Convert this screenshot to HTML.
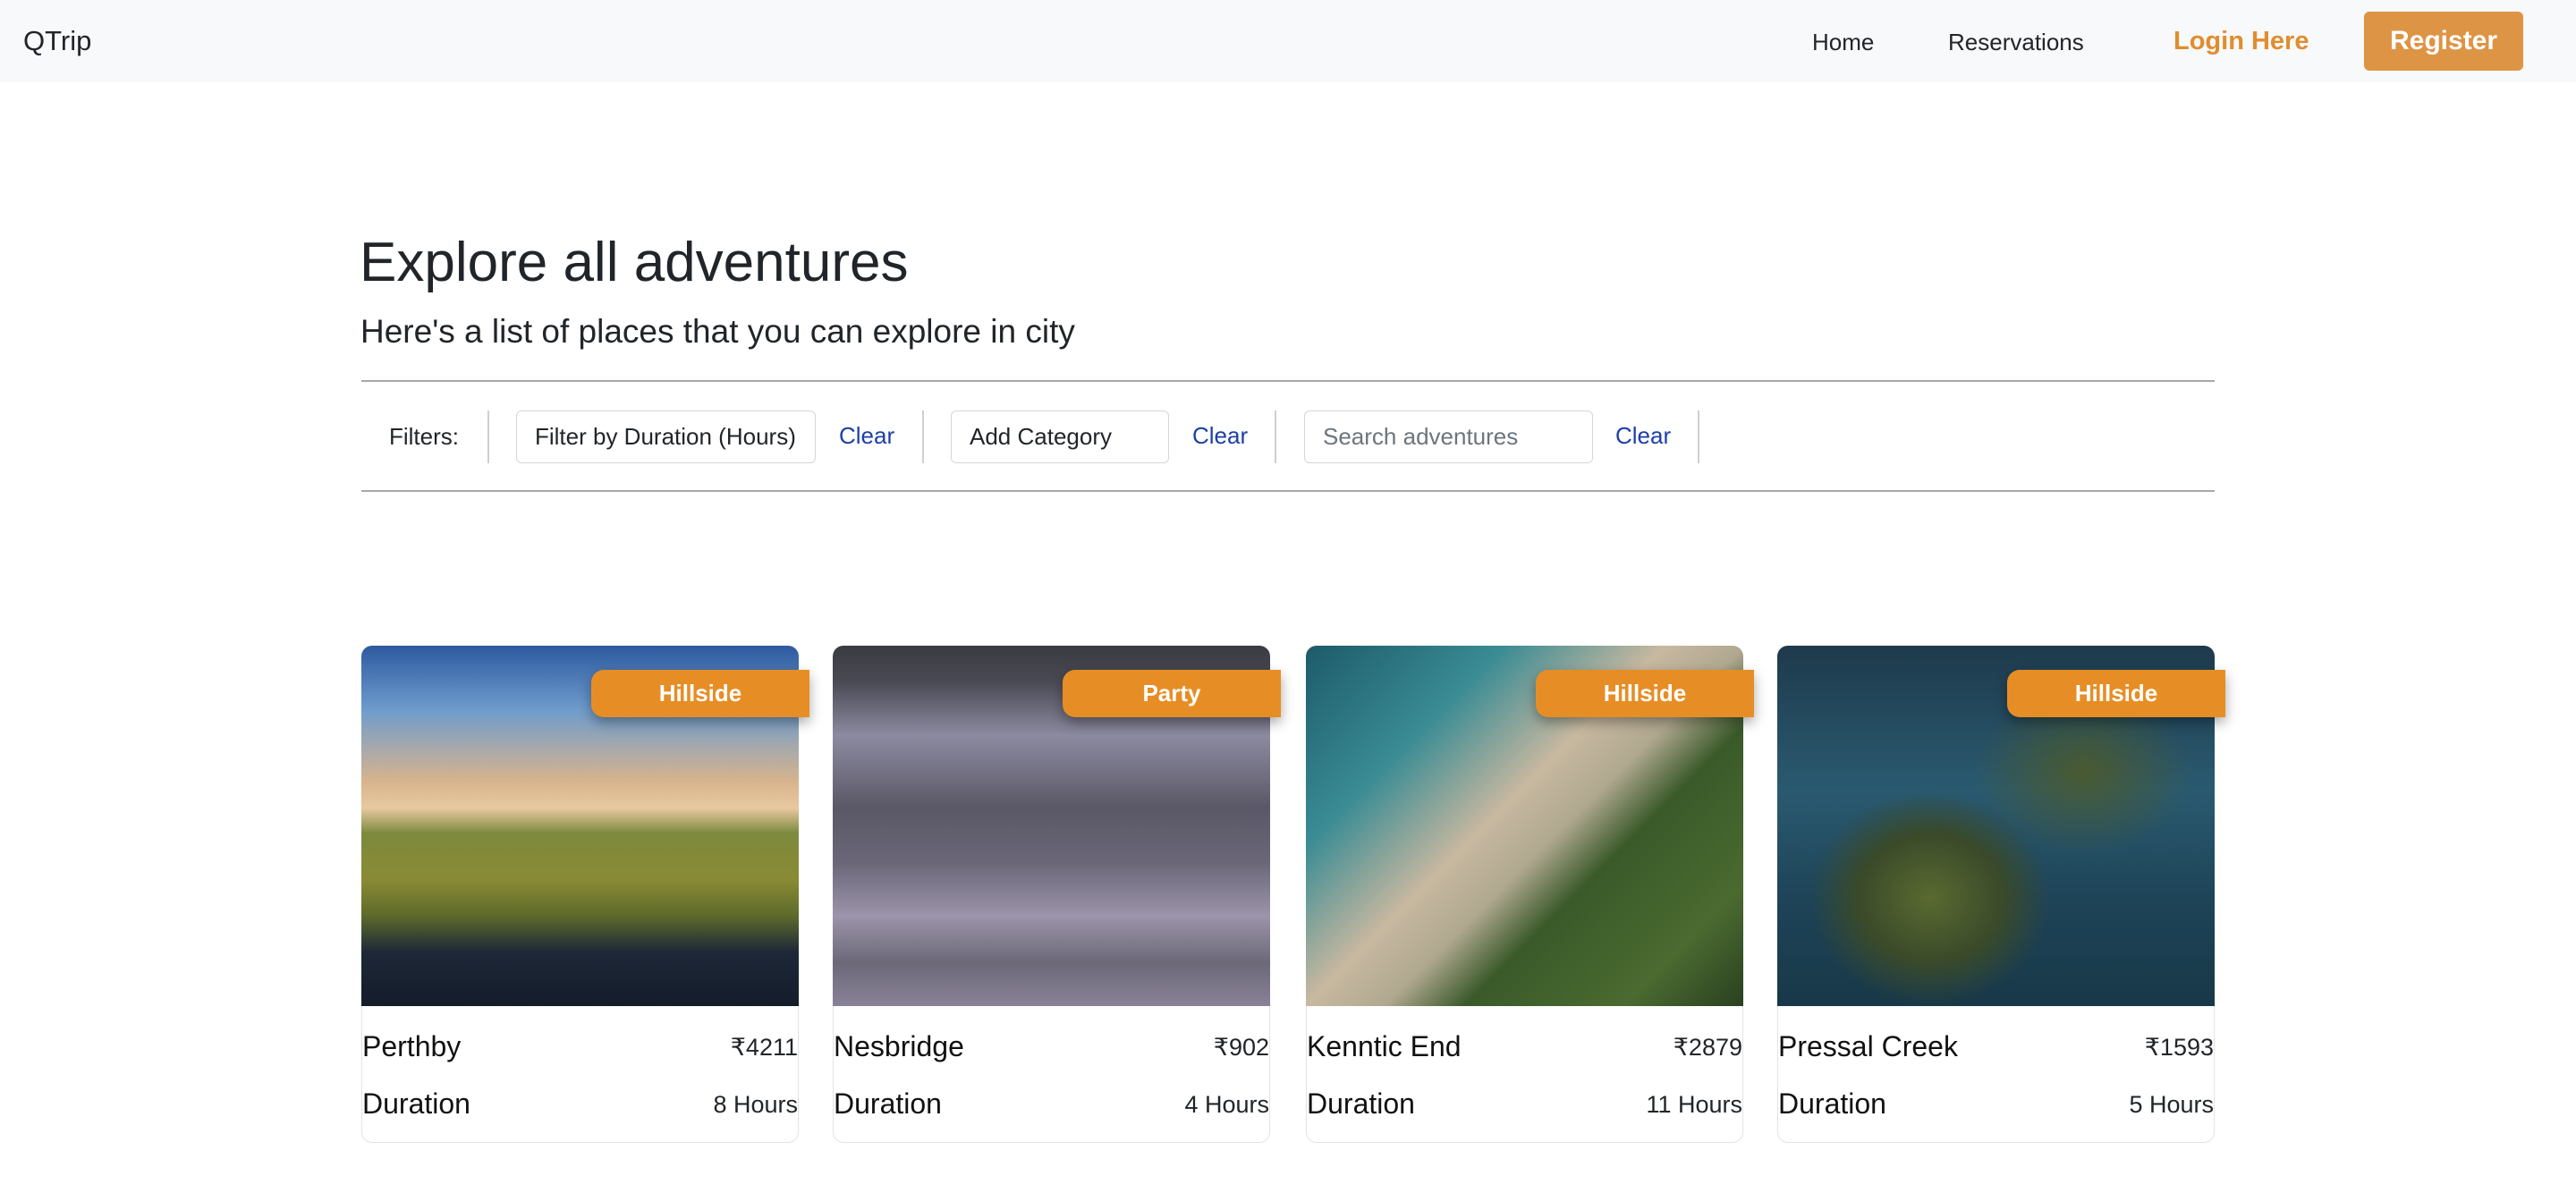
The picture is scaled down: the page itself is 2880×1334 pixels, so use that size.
<!DOCTYPE html>
<html><head><meta charset="utf-8"><style>
*{box-sizing:border-box;margin:0;padding:0}
body{width:2880px;height:1334px;background:#fff;font-family:"Liberation Sans",sans-serif;color:#212529;position:relative;overflow:hidden}
.nav{position:absolute;left:0;top:0;width:2880px;height:92px;background:#f8f9fa}
.a{position:absolute;white-space:nowrap}
.hr{position:absolute;left:404px;width:2072px;height:2px;background:#a8a8a8}
.inp{position:absolute;top:459px;height:59px;border:1.5px solid #d6d6d6;border-radius:6px;font-size:26px;line-height:56px;padding-left:20px;color:#212529;background:#fff}
.clr{position:absolute;top:472px;font-size:26px;color:#1d3fa8}
.sep{position:absolute;top:459px;width:2px;height:59px;background:#cfcfcf}
.card{position:absolute;top:722px;width:489px;height:556px;border:1.5px solid #e3e3e3;border-radius:12px;overflow:visible;background:#fff}
.img{position:absolute;left:-1px;top:-1px;width:489px;height:403px;border-radius:12px 12px 0 0;overflow:hidden}
.ban{position:absolute;left:256px;top:26px;width:244px;height:53px;background:#e68e25;border-radius:14px 0 0 14px;color:#fff;font-weight:bold;font-size:26px;text-align:center;line-height:53px;box-shadow:0 6px 14px rgba(0,0,0,.35)}
.nm{position:absolute;left:0;top:429px;font-size:32px;color:#111}
.pr{position:absolute;right:0;top:433px;font-size:27px}
.du{position:absolute;left:0;top:493px;font-size:32px;color:#111}
.hs{position:absolute;right:0;top:497px;font-size:27px}
</style></head><body>
<div class="nav">
<div class="a" style="left:26px;top:28px;font-size:31px">QTrip</div>
<div class="a" style="left:2026px;top:32px;font-size:26px">Home</div>
<div class="a" style="left:2178px;top:32px;font-size:26px">Reservations</div>
<div class="a" style="left:2430px;top:30px;font-size:29px;font-weight:bold;color:#e18d2e">Login Here</div>
<div class="a" style="left:2643px;top:13px;width:178px;height:66px;background:#dd9444;border-radius:6px;color:#fff;font-size:30px;font-weight:bold;text-align:center;line-height:66px">Register</div>
</div>
<div class="a" style="left:402px;top:258px;font-size:62px">Explore all adventures</div>
<div class="a" style="left:403px;top:350px;font-size:37px">Here's a list of places that you can explore in city</div>
<div class="hr" style="top:425px"></div>
<div class="hr" style="top:548px"></div>
<div class="a" style="left:435px;top:473px;font-size:26px">Filters:</div>
<div class="sep" style="left:545px"></div>
<div class="inp" style="left:577px;width:335px">Filter by Duration (Hours)</div>
<div class="clr" style="left:938px">Clear</div>
<div class="sep" style="left:1031px"></div>
<div class="inp" style="left:1063px;width:244px">Add Category</div>
<div class="clr" style="left:1333px">Clear</div>
<div class="sep" style="left:1425px"></div>
<div class="inp" style="left:1458px;width:323px;color:#6c757d">Search adventures</div>
<div class="clr" style="left:1806px">Clear</div>
<div class="sep" style="left:1898px"></div>

<div class="card" style="left:404px"><div class="img" style="background:linear-gradient(180deg,#2d5aa0 0%,#6f9ccc 18%,#d9b48c 38%,#e8c9a0 45%,#7d8a3e 52%,#8a8a34 65%,#5d6a2a 75%,#1e2838 85%,#141c2a 100%)"></div><div class="ban">Hillside</div><div class="nm">Perthby</div><div class="pr">₹4211</div><div class="du">Duration</div><div class="hs">8 Hours</div></div>
<div class="card" style="left:931px"><div class="img" style="background:linear-gradient(180deg,#3a3a42 0%,#4a4a54 10%,#8c8aa0 25%,#5a5866 45%,#6a6678 60%,#9c94aa 75%,#6c6878 88%,#8a8298 100%)"></div><div class="ban">Party</div><div class="nm">Nesbridge</div><div class="pr">₹902</div><div class="du">Duration</div><div class="hs">4 Hours</div></div>
<div class="card" style="left:1460px"><div class="img" style="background:linear-gradient(135deg,#1d5a6a 0%,#3a8c94 25%,#c8b8a0 45%,#b0a890 55%,#3a5a2a 65%,#4a6a30 85%,#2a4020 100%)"></div><div class="ban">Hillside</div><div class="nm">Kenntic End</div><div class="pr">₹2879</div><div class="du">Duration</div><div class="hs">11 Hours</div></div>
<div class="card" style="left:1987px"><div class="img" style="background:radial-gradient(ellipse at 35% 70%,#5a6a30 0%,#3a4a2a 18%,transparent 30%),radial-gradient(ellipse at 70% 35%,#4a5a30 0%,transparent 25%),linear-gradient(180deg,#1e3a4c 0%,#2a5a70 40%,#1e4458 70%,#183848 100%)"></div><div class="ban">Hillside</div><div class="nm">Pressal Creek</div><div class="pr">₹1593</div><div class="du">Duration</div><div class="hs">5 Hours</div></div>
</body></html>
